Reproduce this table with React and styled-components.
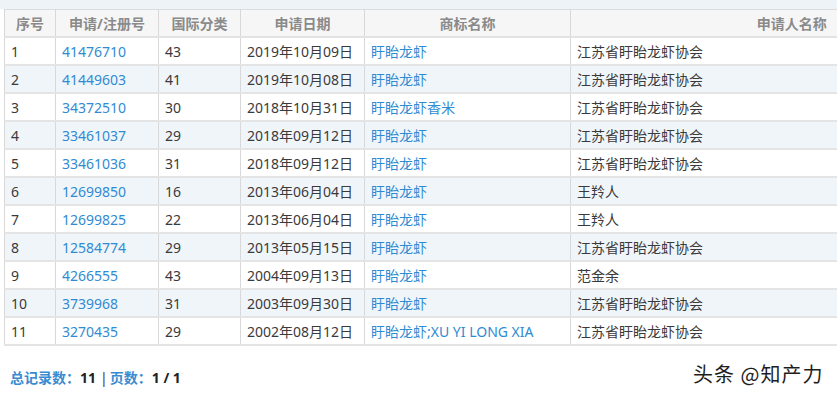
import React from "react";
import styled, { createGlobalStyle } from "styled-components";

const Global = createGlobalStyle`
  html, body { margin: 0; padding: 0; background: #fff; }
  body { font-family: "Noto Sans", "Noto Sans CJK SC", sans-serif; overflow: hidden; }
`;

const Page = styled.div`
  position: relative;
  width: 837px;
  height: 394px;
  overflow: hidden;
  background: #fff;
`;

const TopStrip = styled.div`
  height: 9px;
  background: #eef3f8;
`;

const TableWrap = styled.div`
  padding-left: 4px;
  width: 1008px;
`;

const Table = styled.table`
  width: 1008px;
  border-collapse: collapse;
  table-layout: fixed;
  font-size: 14px;
  border-top: 1px solid #dcdcdc;
  border-bottom: 2px solid #e2e2e2;
`;

const HeadCell = styled.th`
  height: 26px;
  padding: 0 6px;
  background: #f6f6f6;
  color: #8a8a8a;
  font-weight: 700;
  font-size: 14px;
  text-align: center;
  border-left: 1px solid #d8d8d8;
  border-bottom: 2px solid #e2e2e2;
  white-space: nowrap;
`;

const Row = styled.tr`
  background: ${(p) => (p.$alt ? "#f0f5fa" : "#ffffff")};
`;

const Cell = styled.td`
  height: 26px;
  padding: 0 6px;
  color: ${(p) => (p.$link ? "#2f8bd3" : "#3a3a3a")};
  border-left: 1px solid #d8d8d8;
  border-bottom: 2px solid #e4e4e4;
  white-space: nowrap;
  overflow: hidden;
`;

const Footer = styled.div`
  padding: 21px 0 0 10px;
  font-size: 14px;
  font-weight: 700;
  color: #3a8bd0;
`;

const Strong = styled.span`
  color: #222;
  margin-right: 4px;
`;

const Sep = styled.span`
  color: #4a2a6a;
  font-weight: 400;
  margin-right: 2px;
`;

const Watermark = styled.div`
  position: absolute;
  left: 693px;
  top: 359px;
  font-size: 20px;
  color: #1e1e1e;
  font-family: "Noto Sans CJK SC", "Noto Sans", sans-serif;
  text-shadow: 0 0 2px #fff, 0 0 2px #fff;
  letter-spacing: 1px;
`;

const cols = [51, 103, 82, 124, 206, 442];
const heads = ["序号", "申请/注册号", "国际分类", "申请日期", "商标名称", "申请人名称"];

const rows = [
  ["1", "41476710", "43", "2019年10月09日", "盱眙龙虾", "江苏省盱眙龙虾协会"],
  ["2", "41449603", "41", "2019年10月08日", "盱眙龙虾", "江苏省盱眙龙虾协会"],
  ["3", "34372510", "30", "2018年10月31日", "盱眙龙虾香米", "江苏省盱眙龙虾协会"],
  ["4", "33461037", "29", "2018年09月12日", "盱眙龙虾", "江苏省盱眙龙虾协会"],
  ["5", "33461036", "31", "2018年09月12日", "盱眙龙虾", "江苏省盱眙龙虾协会"],
  ["6", "12699850", "16", "2013年06月04日", "盱眙龙虾", "王羚人"],
  ["7", "12699825", "22", "2013年06月04日", "盱眙龙虾", "王羚人"],
  ["8", "12584774", "29", "2013年05月15日", "盱眙龙虾", "江苏省盱眙龙虾协会"],
  ["9", "4266555", "43", "2004年09月13日", "盱眙龙虾", "范金余"],
  ["10", "3739968", "31", "2003年09月30日", "盱眙龙虾", "江苏省盱眙龙虾协会"],
  ["11", "3270435", "29", "2002年08月12日", "盱眙龙虾;XU YI LONG XIA", "江苏省盱眙龙虾协会"],
];

export default function App() {
  return (
    <Page>
      <Global />
      <TopStrip />
      <TableWrap>
        <Table>
          <colgroup>
            {cols.map((w, i) => (
              <col key={i} style={{ width: w }} />
            ))}
          </colgroup>
          <thead>
            <tr>
              {heads.map((h) => (
                <HeadCell key={h}>{h}</HeadCell>
              ))}
            </tr>
          </thead>
          <tbody>
            {rows.map((r, i) => (
              <Row key={r[0]} $alt={i % 2 === 1}>
                <Cell>{r[0]}</Cell>
                <Cell $link>{r[1]}</Cell>
                <Cell>{r[2]}</Cell>
                <Cell>{r[3]}</Cell>
                <Cell $link>{r[4]}</Cell>
                <Cell>{r[5]}</Cell>
              </Row>
            ))}
          </tbody>
        </Table>
      </TableWrap>
      <Footer>
        总记录数：<Strong>11</Strong>
        <Sep>|</Sep>页数：<Strong>1 / 1</Strong>
      </Footer>
      <Watermark>头条 @知产力</Watermark>
    </Page>
  );
}
